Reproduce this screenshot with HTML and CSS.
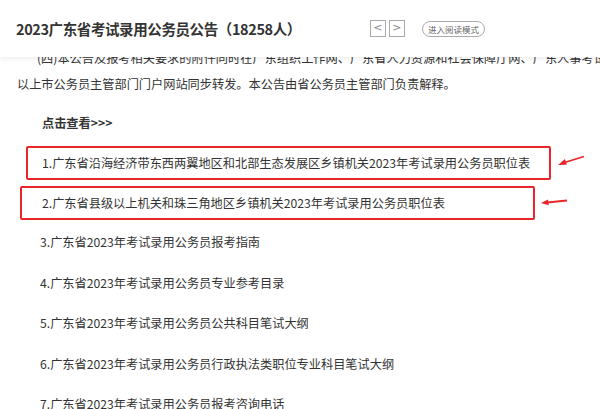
FILE: index.html
```html
<!DOCTYPE html>
<html lang="zh-CN">
<head>
	<meta charset="UTF-8">
	<title>2023广东省考试录用公务员公告</title>
	<link rel="stylesheet" href="styles.css">
</head>
<body>
	<div class="head">
		<h1 class="title">2023广东省考试录用公务员公告（18258人）</h1>
		<div class="pager">
			<span class="pbtn">&lt;</span>
			<span class="pbtn">&gt;</span>
		</div>
		<span class="readmode">进入阅读模式</span>
	</div>
	<div class="content">
		<p class="intro">
			<span class="line first">(四)本公告及报考相关要求的附件同时在广东组织工作网、广东省人力资源和社会保障厅网、广东人事考试网</span>
			<span class="line">以上市公务员主管部门门户网站同步转发。本公告由省公务员主管部门负责解释。</span>
		</p>
		<p class="more">点击查看&gt;&gt;&gt;</p>
		<ul class="list">
			<li class="item mark mark1">1.广东省沿海经济带东西两翼地区和北部生态发展区乡镇机关2023年考试录用公务员职位表
				<svg class="arrow arrow1" width="28" height="12" viewBox="0 0 28 12">
					<path d="M27 1.5 L6 8" stroke="#e8262a" stroke-width="1.8" fill="none"/>
					<path d="M1 10 L8 4 L9.8 9.8 Z" fill="#e8262a"/>
				</svg>
			</li>
			<li class="item mark mark2">2.广东省县级以上机关和珠三角地区乡镇机关2023年考试录用公务员职位表
				<svg class="arrow arrow2" width="28" height="8" viewBox="0 0 28 8">
					<path d="M27 2.5 L7 4.5" stroke="#e8262a" stroke-width="1.8" fill="none"/>
					<path d="M1 5 L8 1.5 L8.7 7.3 Z" fill="#e8262a"/>
				</svg>
			</li>
			<li class="item">3.广东省2023年考试录用公务员报考指南</li>
			<li class="item">4.广东省2023年考试录用公务员专业参考目录</li>
			<li class="item">5.广东省2023年考试录用公务员公共科目笔试大纲</li>
			<li class="item">6.广东省2023年考试录用公务员行政执法类职位专业科目笔试大纲</li>
			<li class="item">7.广东省2023年考试录用公务员报考咨询电话</li>
		</ul>
	</div>
</body>
</html>
```

FILE: styles.css
```css
body{
	margin: 0;
	background-color: #fff;
	font-family: "Microsoft YaHei", "Noto Sans CJK SC", "Noto Sans", sans-serif;
	color: #333;
	overflow: hidden;
}
.head{
	height: 57px;
	display: flex;
	align-items: center;
	padding-left: 16px;
	background-color: #fff;
	position: relative;
	z-index: 10;
	box-shadow: 0 2px 4px rgba(0,0,0,.07);
}
.title{
	margin: 0;
	font-size: 14.5px;
	font-weight: bold;
	letter-spacing: -0.4px;
	color: #333;
}
.pager{
	display: flex;
	gap: 3px;
	margin-left: 69px;
}
.pbtn{
	width: 14px;
	height: 15px;
	border: 1px solid #aaa;
	color: #888;
	font-size: 11px;
	line-height: 14px;
	text-align: center;
	font-family: "DejaVu Sans", sans-serif;
}
.readmode{
	margin-left: 17px;
	border: 1px solid #aaa;
	border-radius: 8px;
	padding: 1px 5px;
	font-size: 8.5px;
	line-height: 12px;
	color: #666;
}
.content{
	padding-left: 17px;
}
.intro{
	margin: -12px 0 0;
	font-size: 12.2px;
	line-height: 26px;
	white-space: nowrap;
	overflow: hidden;
}
.line{
	display: block;
}
.line.first{
	padding-left: 20px;
}
.more{
	margin: 13px 0 0 25px;
	font-size: 12.2px;
	font-weight: bold;
	line-height: 26px;
}
.list{
	list-style: none;
	margin: 10px 0 0;
	padding: 0;
}
.item{
	font-size: 12.2px;
	height: 40.5px;
	line-height: 40.5px;
	padding-left: 23px;
	position: relative;
}
.item.mark{
	border: 2px solid #e8262a;
	border-radius: 2px;
	box-sizing: border-box;
	display: flex;
	align-items: center;
	line-height: normal;
}
.mark1{
	width: 525px;
	height: 34px;
	margin-left: 9px;
	padding-left: 14px;
}
.mark2{
	width: 515px;
	height: 34px;
	margin-left: 3px;
	margin-top: 6px;
	margin-bottom: 2px;
	padding-left: 20px;
}
.arrow{
	position: absolute;
}
.arrow1{
	left: 529px;
	top: 7px;
}
.arrow2{
	left: 518px;
	top: 10px;
}
```
